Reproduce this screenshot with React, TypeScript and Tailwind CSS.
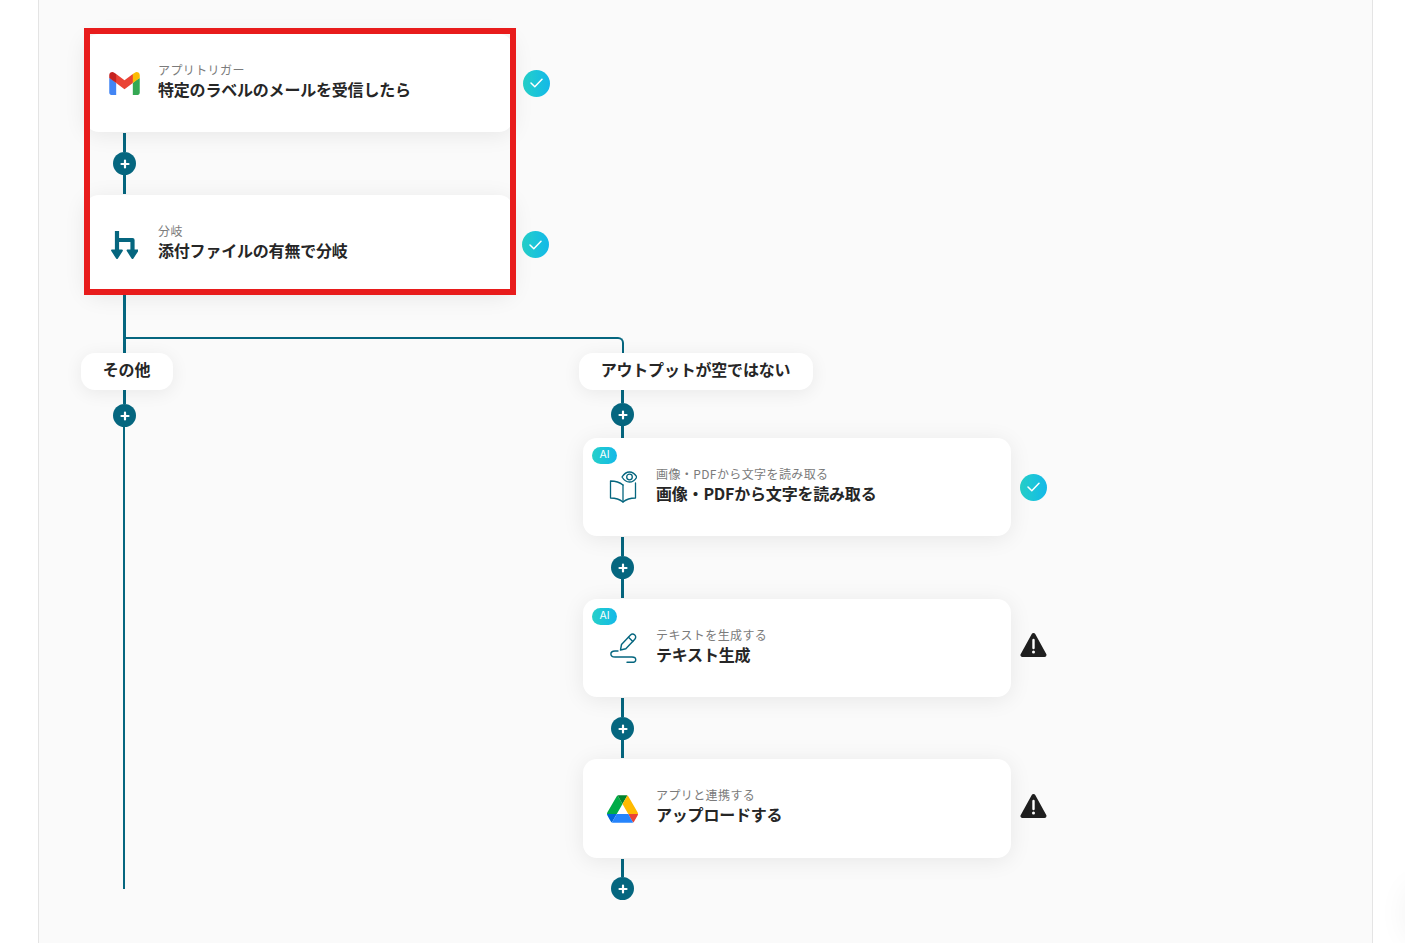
import type { ReactNode } from "react";

const TEAL = "#05667f";

function GmailIcon() {
  return (
    <svg width="31" height="23" viewBox="0 0 256 193">
      <path fill="#4285F4" d="M58.18 192.05V93.14L27.5 65.08 0 49.5v125.1c0 9.65 7.82 17.45 17.45 17.45h40.73z" />
      <path fill="#34A853" d="M197.82 192.05h40.73c9.65 0 17.45-7.82 17.45-17.45V49.5l-31.16 17.84-27.02 25.8v98.91z" />
      <path fill="#EA4335" d="M58.18 93.14l-4.17-38.65 4.17-36.99L128 69.87l69.82-52.37 4.67 34.99-4.67 40.65L128 145.5z" />
      <path fill="#FBBC04" d="M197.82 17.5v75.64L256 49.5V26.23c0-21.58-24.64-33.88-41.89-20.94l-16.29 12.21z" />
      <path fill="#C5221F" d="M0 49.5l26.76 20.07 31.42 23.57V17.5L41.89 5.29C24.61-7.65 0 4.65 0 26.23V49.5z" />
    </svg>
  );
}

function DriveIcon() {
  return (
    <svg width="31" height="28" viewBox="0 0 87.3 78">
      <path fill="#0066da" d="m6.6 66.85 3.85 6.65c.8 1.4 1.95 2.5 3.3 3.3l13.75-23.8h-27.5c0 1.55.4 3.1 1.2 4.5z" />
      <path fill="#00ac47" d="m43.65 25-13.75-23.8c-1.35.8-2.5 1.9-3.3 3.3l-25.4 44a9.06 9.06 0 0 0 -1.2 4.5h27.5z" />
      <path fill="#ea4335" d="m73.55 76.8c1.35-.8 2.5-1.9 3.3-3.3l1.6-2.75 7.65-13.25c.8-1.4 1.2-2.95 1.2-4.5h-27.502l5.852 11.5z" />
      <path fill="#00832d" d="m43.65 25 13.75-23.8c-1.35-.8-2.9-1.2-4.5-1.2h-18.5c-1.6 0-3.15.45-4.5 1.2z" />
      <path fill="#2684fc" d="m59.8 53h-32.3l-13.75 23.8c1.35.8 2.9 1.2 4.5 1.2h50.8c1.6 0 3.15-.45 4.5-1.2z" />
      <path fill="#ffba00" d="m73.4 26.5-12.7-22c-.8-1.4-1.95-2.5-3.3-3.3l-13.75 23.8 16.15 28h27.45c0-1.55-.4-3.1-1.2-4.5z" />
    </svg>
  );
}

function BranchIcon() {
  return (
    <svg width="27" height="28" viewBox="0 0 27 28" fill="none">
      <path d="M6 0V21M6 9h15.500V21" stroke={TEAL} strokeWidth="4.200" strokeLinejoin="round" />
      <path d="M1.200 19.500h9.600L6 26.800z" fill={TEAL} stroke={TEAL} strokeWidth="2.200" strokeLinejoin="round" />
      <path d="M16.700 19.500h9.600l-4.800 7.300z" fill={TEAL} stroke={TEAL} strokeWidth="2.200" strokeLinejoin="round" />
    </svg>
  );
}

function BookEyeIcon() {
  return (
    <svg width="28" height="32" viewBox="0 0 28 32" fill="none" stroke={TEAL} strokeWidth="1.300" strokeLinejoin="round" strokeLinecap="round">
      <path d="M14 14C11 11.500 6 10 1.500 10V27C6 27 11 28.500 14 31C17 28.500 22 27 26.500 27V12" />
      <path d="M14 14V31" />
      <path d="M13 6C15 2.800 17.500 1 20.500 1S26 2.800 27.800 6C26 9.200 23.500 11 20.500 11S15 9.200 13 6z" />
      <circle cx="20.500" cy="6" r="2.800" />
    </svg>
  );
}

function PenIcon() {
  return (
    <svg width="28" height="30" viewBox="0 0 28 30" fill="none" stroke={TEAL} strokeWidth="1.400" strokeLinecap="round" strokeLinejoin="round">
      <path d="M11.500 17L12.500 11.500L21.500 2C22.700 0.800 24.500 0.800 25.800 2C27 3.200 27 5 25.800 6.200L16.800 15.800z" />
      <path d="M19.500 4.200L23.800 8.400" />
      <path d="M9 18H6C0.500 18 0.500 24 6 24H23C28 24 28 29.300 23 29.300H18" />
    </svg>
  );
}

function Check({ className = "" }: { className?: string }) {
  return (
    <div className={`flex h-[27px] w-[27px] shrink-0 items-center justify-center rounded-full bg-gradient-to-r from-[#26d0c8] to-[#14b8e8] ${className}`}>
      <svg width="13" height="10" viewBox="0 0 13 10" fill="none">
        <path d="M1 5l3.800 3.800L12 1.200" stroke="white" strokeWidth="1.500" strokeLinecap="round" strokeLinejoin="round" />
      </svg>
    </div>
  );
}

function Warning() {
  return (
    <svg width="27" height="26" viewBox="0 0 27 26" className="mb-[6px] shrink-0">
      <path d="M13.500 3L2.500 23h22z" fill="#1f1f1f" stroke="#1f1f1f" strokeWidth="4" strokeLinejoin="round" />
      <path d="M13.500 8v8" stroke="white" strokeWidth="2.400" strokeLinecap="round" />
      <circle cx="13.500" cy="20" r="1.500" fill="white" />
    </svg>
  );
}

function Plus() {
  return (
    <div className="flex h-[23px] w-[23px] shrink-0 items-center justify-center rounded-full bg-[#05667f]">
      <svg width="10" height="10" viewBox="0 0 10 10">
        <path d="M5 1.500v7M1.500 5h7" stroke="white" strokeWidth="2.200" strokeLinecap="round" />
      </svg>
    </div>
  );
}

// 79px wide so the line sits on the card's icon column
function Connector({ top, bottom, gap = 1 }: { top: number; bottom: number; gap?: number }) {
  return (
    <div className="flex w-[79px] flex-col items-center" style={{ paddingTop: gap, paddingBottom: bottom > 0 ? gap : 0 }}>
      <div className="w-[3px] bg-[#05667f]" style={{ height: top - gap }} />
      <Plus />
      {bottom > 0 && <div className="w-[3px] bg-[#05667f]" style={{ height: bottom - gap }} />}
    </div>
  );
}

function Card({
  icon,
  sub,
  title,
  ai,
  status,
  height = 99,
}: {
  icon: ReactNode;
  sub: string;
  title: string;
  ai?: boolean;
  status: ReactNode;
  height?: number;
}) {
  return (
    <div className="flex items-center gap-[9px]">
      <div
        className="relative flex w-[428px] items-center gap-[18px] rounded-[14px] bg-white pl-[24px] shadow-[0_3px_22px_rgba(0,0,0,0.08)]"
        style={{ height }}
      >
        {ai && (
          <span className="absolute left-[9px] top-[9px] flex h-[17px] w-[25px] items-center justify-center rounded-full bg-gradient-to-r from-[#26d0c8] to-[#14b8e8] font-['Inter',sans-serif] text-[10.500px] leading-none text-white">
            AI
          </span>
        )}
        <div className="flex w-[31px] shrink-0 justify-center">{icon}</div>
        <div className={`flex flex-col ${height === 99 ? "mb-[7px]" : "mb-[5px]"}`}>
          <span className="text-[12px] leading-[18px] tracking-[0.4px] text-[#7b7b7b]">{sub}</span>
          <span className="text-[16px] font-bold leading-[21px] tracking-[-0.2px] text-[#262626]">{title}</span>
        </div>
      </div>
      {status}
    </div>
  );
}

function BranchLabel({ text, width }: { text: string; width: number }) {
  return (
    <div
      className="relative z-10 -ml-[4px] flex h-[37px] items-center justify-center rounded-[14px] bg-white pb-[5px] pr-[1px] text-[16px] font-bold tracking-[-0.2px] text-[#262626] shadow-[0_3px_18px_rgba(0,0,0,0.07)]"
      style={{ width }}
    >
      {text}
    </div>
  );
}

export default function App() {
  return (
    <div className="relative h-[943px] w-[1405px] overflow-hidden bg-white font-['Noto_Sans_CJK_JP',sans-serif]">
      <div className="relative ml-[38px] h-full w-[1335px] border-x border-[#e4e4e4] bg-[#fafafa] pl-[46px] pt-[34px]">
        <Card icon={<GmailIcon />} sub="アプリトリガー" title="特定のラベルのメールを受信したら" status={<Check className="ml-[1px]" />} height={98} />
        <Connector top={20} bottom={20} />
        <Card icon={<BranchIcon />} sub="分岐" title="添付ファイルの有無で分岐" status={<Check />} />

        <div className="relative">
          <div className="flex w-[79px] justify-center">
            <div className="h-[59px] w-[3px] bg-[#05667f]" />
          </div>
          <div className="absolute left-[40px] top-[43px] h-[16px] w-[499px] rounded-tr-[6px] border-r-2 border-t-2 border-[#05667f]" />
        </div>

        <div className="flex">
          <div className="w-[498px]">
            <BranchLabel text="その他" width={92} />
            <div className="flex w-[79px] flex-col items-center">
              <div className="h-[14px] w-[3px] bg-[#05667f]" />
              <Plus />
              <div className="mr-[2px] h-[462px] w-[2px] bg-[#05667f]" />
            </div>
          </div>
          <div>
            <BranchLabel text="アウトプットが空ではない" width={234} />
            <Connector top={13} bottom={12} gap={0} />
            <Card ai icon={<BookEyeIcon />} sub="画像・PDFから文字を読み取る" title="画像・PDFから文字を読み取る" status={<Check />} height={98} />
            <Connector top={20} bottom={20} />
            <Card ai icon={<PenIcon />} sub="テキストを生成する" title="テキスト生成" status={<Warning />} height={98} />
            <Connector top={20} bottom={19} />
            <Card icon={<DriveIcon />} sub="アプリと連携する" title="アップロードする" status={<Warning />} />
            <Connector top={19} bottom={0} />
          </div>
        </div>

        {/* red highlight drawn over the first two steps */}
        <div className="absolute left-[45px] top-[28px] h-[267px] w-[432px] border-[6px] border-[#e81c1c]" />
      </div>
      {/* edge of a floating widget, mostly off screen */}
      <div className="absolute -right-[40px] bottom-[0px] h-[60px] w-[40px] rounded-full shadow-[0_0_30px_rgba(0,0,0,0.05)]" />
    </div>
  );
}
